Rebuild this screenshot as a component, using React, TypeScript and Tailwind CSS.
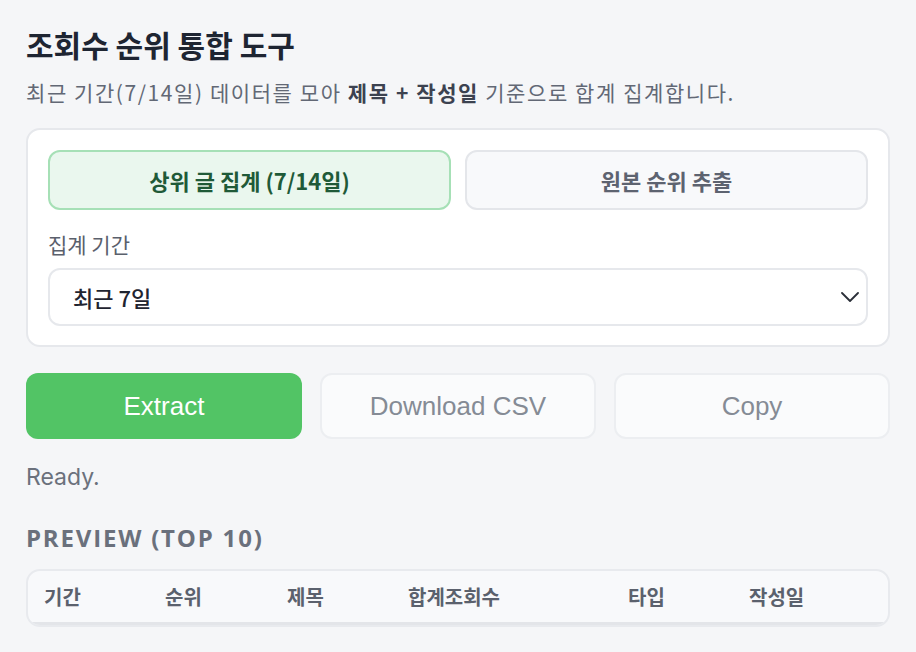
const KR = { fontFamily: '"Noto Sans CJK KR", "Noto Sans", sans-serif' };
const EN = { fontFamily: '"Liberation Sans", Arial, sans-serif' };

const COLUMNS = [
  { label: '기간', w: 'w-[121px]' },
  { label: '순위', w: 'w-[122px]' },
  { label: '제목', w: 'w-[121px]' },
  { label: '합계조회수', w: 'w-[220px]' },
  { label: '타입', w: 'w-[121px]' },
  { label: '작성일', w: 'w-[120px]' },
];

export default function App() {
  return (
    <div className="min-h-[652px] w-full bg-[#f5f6f8] px-[26px] pt-[26px] pb-6 text-[#1f2430]" style={KR}>
      {/* Header */}
      <h1 className="text-[30px] font-bold leading-[36px] text-[#1e2532]">조회수 순위 통합 도구</h1>
      <p className="mt-[15px] text-[21px] leading-[30px] tracking-[0.075em] text-[#626875]">
        최근 기간(7/14일) 데이터를 모아 <b className="font-bold text-[#3c4250]">제목 + 작성일</b> 기준으로 합계 집계합니다.
      </p>

      {/* Mode card */}
      <div className="mt-[21px] rounded-[14px] border-2 border-[#e6e8ec] bg-white px-[20px] pt-[20px] pb-[19px]">
        <div className="grid grid-cols-2 gap-[14px]">
          <button className="h-[60px] rounded-[12px] border-2 border-[#a6e0b6] bg-[#eaf7ee] text-[22px] font-bold text-[#1f5a38]">
            상위 글 집계 (7/14일)
          </button>
          <button className="h-[60px] rounded-[12px] border-2 border-[#e4e6ea] bg-[#f8f9fb] text-[22px] font-bold text-[#5d6370]">
            원본 순위 추출
          </button>
        </div>

        <div className="mt-[20px] text-[21px] leading-[28px] text-[#5a606c]">집계 기간</div>
        <div className="mt-[10px] flex h-[58px] items-center justify-between rounded-[12px] border-2 border-[#e6e8ec] bg-white pl-[23px] pr-[7px]">
          <span className="text-[22px] font-medium text-[#1f2430]">최근 7일</span>
          <svg width="18" height="10" viewBox="0 0 18 10" fill="none" className="text-[#2a2f38]">
            <path d="M1 1l8 8 8-8" stroke="currentColor" strokeWidth="1.8" strokeLinecap="round" strokeLinejoin="round" />
          </svg>
        </div>
      </div>

      {/* Action buttons */}
      <div className="mt-[26px] grid grid-cols-3 gap-[18px]" style={EN}>
        <button className="h-[66px] rounded-[12px] bg-[#52c465] text-[26px] text-white">Extract</button>
        <button className="h-[66px] rounded-[12px] border-2 border-[#eceef1] bg-[#fafbfc] text-[26px] text-[#858b95]">
          Download CSV
        </button>
        <button className="h-[66px] rounded-[12px] border-2 border-[#eceef1] bg-[#fafbfc] text-[26px] text-[#858b95]">
          Copy
        </button>
      </div>

      <div className="mt-[23px] text-[23px] leading-[30px] text-[#6b717c]" style={{ fontFamily: 'Inter, sans-serif' }}>
        Ready.
      </div>

      <div
        className="mt-[31px] text-[24px] font-bold tracking-[0.075em] leading-[30px] text-[#6a707c]"
        style={{ fontFamily: '"Open Sans", sans-serif' }}
      >
        PREVIEW (TOP 10)
      </div>

      {/* Preview table */}
      <div className="mt-[16px] overflow-hidden rounded-[14px] border-2 border-[#e8eaee] bg-[#f8f9fb]">
        <div className="flex h-[54px] items-center border-b-[3px] border-[#e3e5e9] pl-[16px]">
          {COLUMNS.map((c) => (
            <div key={c.label} className={`${c.w} text-[20px] font-bold text-[#5b616d]`}>
              {c.label}
            </div>
          ))}
        </div>
      </div>
    </div>
  );
}
